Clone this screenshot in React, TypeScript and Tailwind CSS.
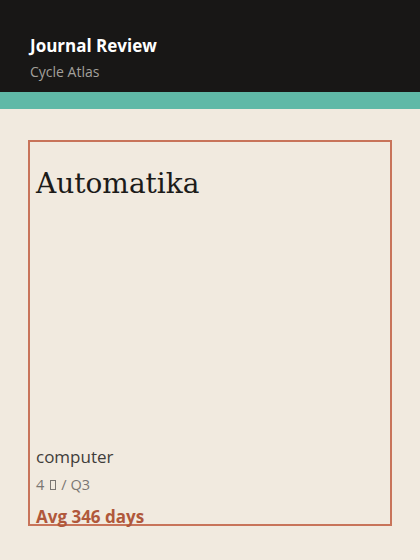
export default function App() {
  return (
    <div
      className="flex h-[560px] w-[420px] flex-col bg-[#f1eadf]"
      style={{ fontFamily: '"Open Sans", "Noto Sans", sans-serif' }}
    >
      {/* Header */}
      <div className="flex h-[92px] flex-col justify-end bg-[#181716] px-[30px] pb-[10px]">
        <div className="text-[17px] font-bold leading-[24px] text-white">Journal Review</div>
        <div className="mt-[4px] text-[14px] leading-[20px] text-[#a3a09c]">Cycle Atlas</div>
      </div>
      <div className="h-[17px] bg-[#5fb9a7]" />

      {/* Card */}
      <div className="px-[28px] pt-[31px]">
        <div className="flex h-[386px] flex-col border-2 border-[#c8745a] px-[6px]">
          <div
            className="mt-[22px] text-[28px] leading-[40px] text-[#1c1b19]"
            style={{ fontFamily: '"DejaVu Serif", serif' }}
          >
            Automatika
          </div>
          <div className="flex-1" />
          <div className="text-[17px] leading-[24px] text-[#3f3d3a]">computer</div>
          <div className="mt-[6px] flex items-center text-[14.5px] leading-[20px] text-[#7a7672]">
            <span>4</span>
            <span className="ml-[6px] mr-[5px] inline-block h-[10px] w-[6px] border border-[#7a7672]" />
            <span>/ Q3</span>
          </div>
          <div className="-mb-[5px] mt-[10px] text-[17px] font-bold leading-[24px] text-[#b0583b]">Avg 346 days</div>
        </div>
      </div>
    </div>
  );
}
